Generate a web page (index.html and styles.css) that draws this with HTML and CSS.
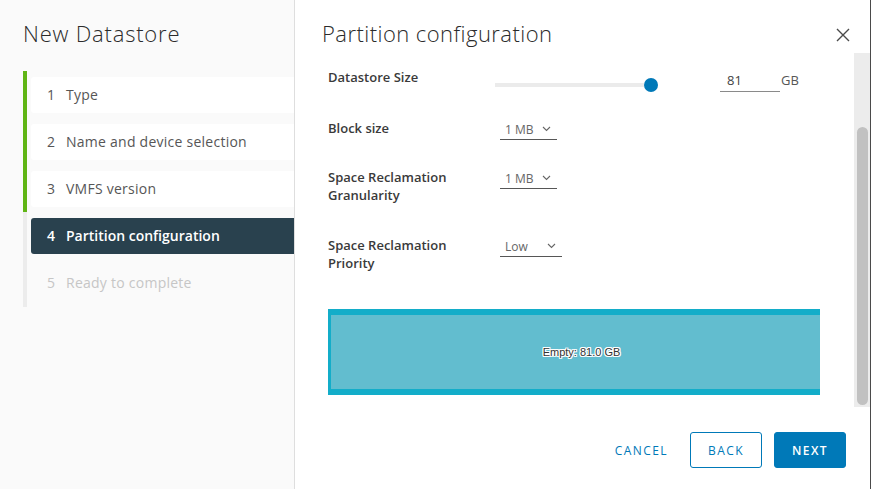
FILE: index.html
```html
<!DOCTYPE html>
<html lang="en">
<head>
<meta charset="utf-8">
<title>New Datastore</title>
<link rel="stylesheet" href="styles.css">
</head>
<body>
<div class="dialog">
  <aside class="sidebar">
    <h1 class="side-title">New Datastore</h1>
    <ol class="steps">
      <li class="step done"><span class="num">1</span>Type</li>
      <li class="step done"><span class="num">2</span>Name and device selection</li>
      <li class="step done"><span class="num">3</span>VMFS version</li>
      <li class="step active"><span class="num">4</span>Partition configuration</li>
      <li class="step disabled"><span class="num">5</span>Ready to complete</li>
    </ol>
  </aside>
  <main class="main">
    <header class="main-head">
      <h2 class="main-title">Partition configuration</h2>
      <button class="close" aria-label="Close">
        <svg width="14" height="14" viewBox="0 0 14 14"><path d="M1 1 L13 13 M13 1 L1 13" stroke="#4a4a4a" stroke-width="1.4" fill="none"/></svg>
      </button>
    </header>
    <div class="body">
      <div class="content">
        <div class="row row-size">
          <div class="label">Datastore Size</div>
          <div class="slider"><div class="track"></div><div class="knob"></div></div>
          <div class="num-input">81</div>
          <div class="unit">GB</div>
        </div>
        <div class="row row-block">
          <div class="label">Block size</div>
          <div class="select sel-mb"><span>1 MB</span><svg class="chev" width="9" height="6" viewBox="0 0 9 6"><path d="M1 1 L4.5 4.5 L8 1" stroke="#666" stroke-width="1.1" fill="none"/></svg></div>
        </div>
        <div class="row row-gran">
          <div class="label">Space Reclamation<br>Granularity</div>
          <div class="select sel-mb"><span>1 MB</span><svg class="chev" width="9" height="6" viewBox="0 0 9 6"><path d="M1 1 L4.5 4.5 L8 1" stroke="#666" stroke-width="1.1" fill="none"/></svg></div>
        </div>
        <div class="row row-prio">
          <div class="label">Space Reclamation<br>Priority</div>
          <div class="select sel-low"><span>Low</span><svg class="chev" width="9" height="6" viewBox="0 0 9 6"><path d="M1 1 L4.5 4.5 L8 1" stroke="#666" stroke-width="1.1" fill="none"/></svg></div>
        </div>
        <div class="partition"><span>Empty: 81.0 GB</span></div>
      </div>
      <div class="scrollbar"><div class="thumb"></div></div>
    </div>
    <footer class="footer">
      <button class="btn btn-flat">CANCEL</button>
      <button class="btn btn-outline">BACK</button>
      <button class="btn btn-primary">NEXT</button>
    </footer>
  </main>
</div>
</body>
</html>
```
FILE: styles.css
```css
* { box-sizing: border-box; }
html, body { margin: 0; padding: 0; }
body {
  font-family: "Open Sans", Lato, "Liberation Sans", sans-serif;
  color: #333;
  background: #fff;
}
.dialog {
  display: flex;
  width: 871px;
  height: 489px;
  overflow: hidden;
}
.sidebar {
  width: 295px;
  flex: none;
  background: #fafafa;
  border-right: 1px solid #dedede;
}
.side-title {
  margin: 21px 0 0 23px;
  font-size: 22px;
  line-height: 24px;
  font-weight: 300;
  letter-spacing: 0.8px;
  color: #2b2b2b;
}
.steps {
  list-style: none;
  margin: 26px 0 0 23px;
  padding: 6px 0 6px 8px;
  display: flex;
  flex-direction: column;
  gap: 11px;
  background: linear-gradient(to bottom, #60b515 0, #60b515 141px, #ececec 141px) left top / 4px 100% no-repeat;
}
.step {
  height: 36px;
  display: flex;
  align-items: center;
  padding: 0 0 1px 16px;
  font-size: 14px;
  letter-spacing: 0.25px;
  border-radius: 3px 0 0 3px;
}
.num { width: 19px; flex: none; }
.step.done { background: #fff; color: #565656; }
.step.active { background: #29414e; color: #fff; font-weight: 600; letter-spacing: 0; }
.step.disabled { color: #c6c6c6; }

.main {
  flex: 1;
  display: flex;
  flex-direction: column;
  border-right: 1px solid #4a4a4a;
  min-width: 0;
}
.main-head {
  height: 53px;
  flex: none;
  display: flex;
  justify-content: space-between;
  align-items: flex-start;
  padding: 21px 20px 0 27px;
}
.main-title {
  margin: 0;
  font-size: 22px;
  line-height: 24px;
  font-weight: 300;
  letter-spacing: 0.45px;
  color: #2b2b2b;
}
.close {
  border: 0;
  background: none;
  padding: 0;
  margin-top: 7px;
  width: 14px;
  height: 14px;
  display: block;
}
.close svg { display: block; }
.body {
  height: 354px;
  flex: none;
  display: flex;
}
.content {
  flex: 1;
  padding: 15px 34px 0 33px;
  overflow: hidden;
}
.row {
  display: flex;
  align-items: flex-start;
}
.label {
  width: 172px;
  flex: none;
  font-size: 13px;
  line-height: 18px;
  font-weight: 600;
  color: #3a3a3a;
}
.row-size { height: 18px; }
.row-size .label { width: 167px; }
.row-block { margin-top: 33px; }
.row-gran { margin-top: 28px; }
.row-prio { margin-top: 32px; }
.slider {
  width: 163px;
  height: 14px;
  margin-top: 10px;
  display: flex;
  align-items: center;
  flex: none;
}
.track {
  width: 149px;
  height: 4px;
  background: #ebebeb;
}
.knob {
  width: 14px;
  height: 14px;
  border-radius: 50%;
  background: #0079b8;
}
.num-input {
  width: 60px;
  height: 23px;
  margin-left: 62px;
  margin-top: 1px;
  padding-left: 7px;
  font-size: 13px;
  line-height: 22px;
  color: #444;
  border-bottom: 1px solid #8a8a8a;
  flex: none;
}
.unit {
  margin-left: 1px;
  margin-top: 1px;
  font-size: 13px;
  line-height: 22px;
  color: #565656;
}
.select {
  height: 21px;
  display: flex;
  align-items: center;
  justify-content: space-between;
  padding: 0 6px 0 5px;
  font-size: 12px;
  color: #666;
  border-bottom: 1px solid #565656;
}
.sel-mb { width: 57px; }
.sel-low { width: 62px; }
.chev { display: block; }
.partition {
  margin-top: 37px;
  height: 86px;
  background: #62bdcf;
  border-top: 6px solid #13adc9;
  border-bottom: 6px solid #13adc9;
  border-left: 3px solid #13adc9;
  display: flex;
  align-items: center;
  justify-content: center;
  padding-left: 12px;
}
.partition span {
  font-family: "Liberation Sans", Arial, sans-serif;
  font-size: 11px;
  color: #333;
  text-shadow: 1px 0 0 #fff, -1px 0 0 #fff, 0 1px 0 #fff, 0 -1px 0 #fff, 1px 1px 0 #fff, -1px -1px 0 #fff, 1px -1px 0 #fff, -1px 1px 0 #fff;
}
.scrollbar {
  width: 16px;
  flex: none;
  background: #ececec;
  padding: 74px 2px 2px 3px;
  display: flex;
  flex-direction: column;
}
.thumb {
  flex: 1;
  background: #c1c1c1;
  border-radius: 6px;
}
.footer {
  flex: 1;
  display: flex;
  justify-content: flex-end;
  align-items: flex-start;
  gap: 12px;
  padding: 25px 24px 0 0;
}
.btn {
  height: 36px;
  min-width: 72px;
  padding: 0 12px;
  font-family: "Open Sans", Lato, sans-serif;
  font-size: 12px;
  font-weight: 500;
  letter-spacing: 0.12em;
  border-radius: 3px;
  border: 1px solid transparent;
  background: none;
  color: #0079b8;
}
.btn-flat { padding: 0 9px; min-width: 0; }
.btn-outline { border-color: #0079b8; background: #fff; }
.btn-primary { background: #0079b8; border-color: #0079b8; color: #fff; font-weight: 600; }
```
